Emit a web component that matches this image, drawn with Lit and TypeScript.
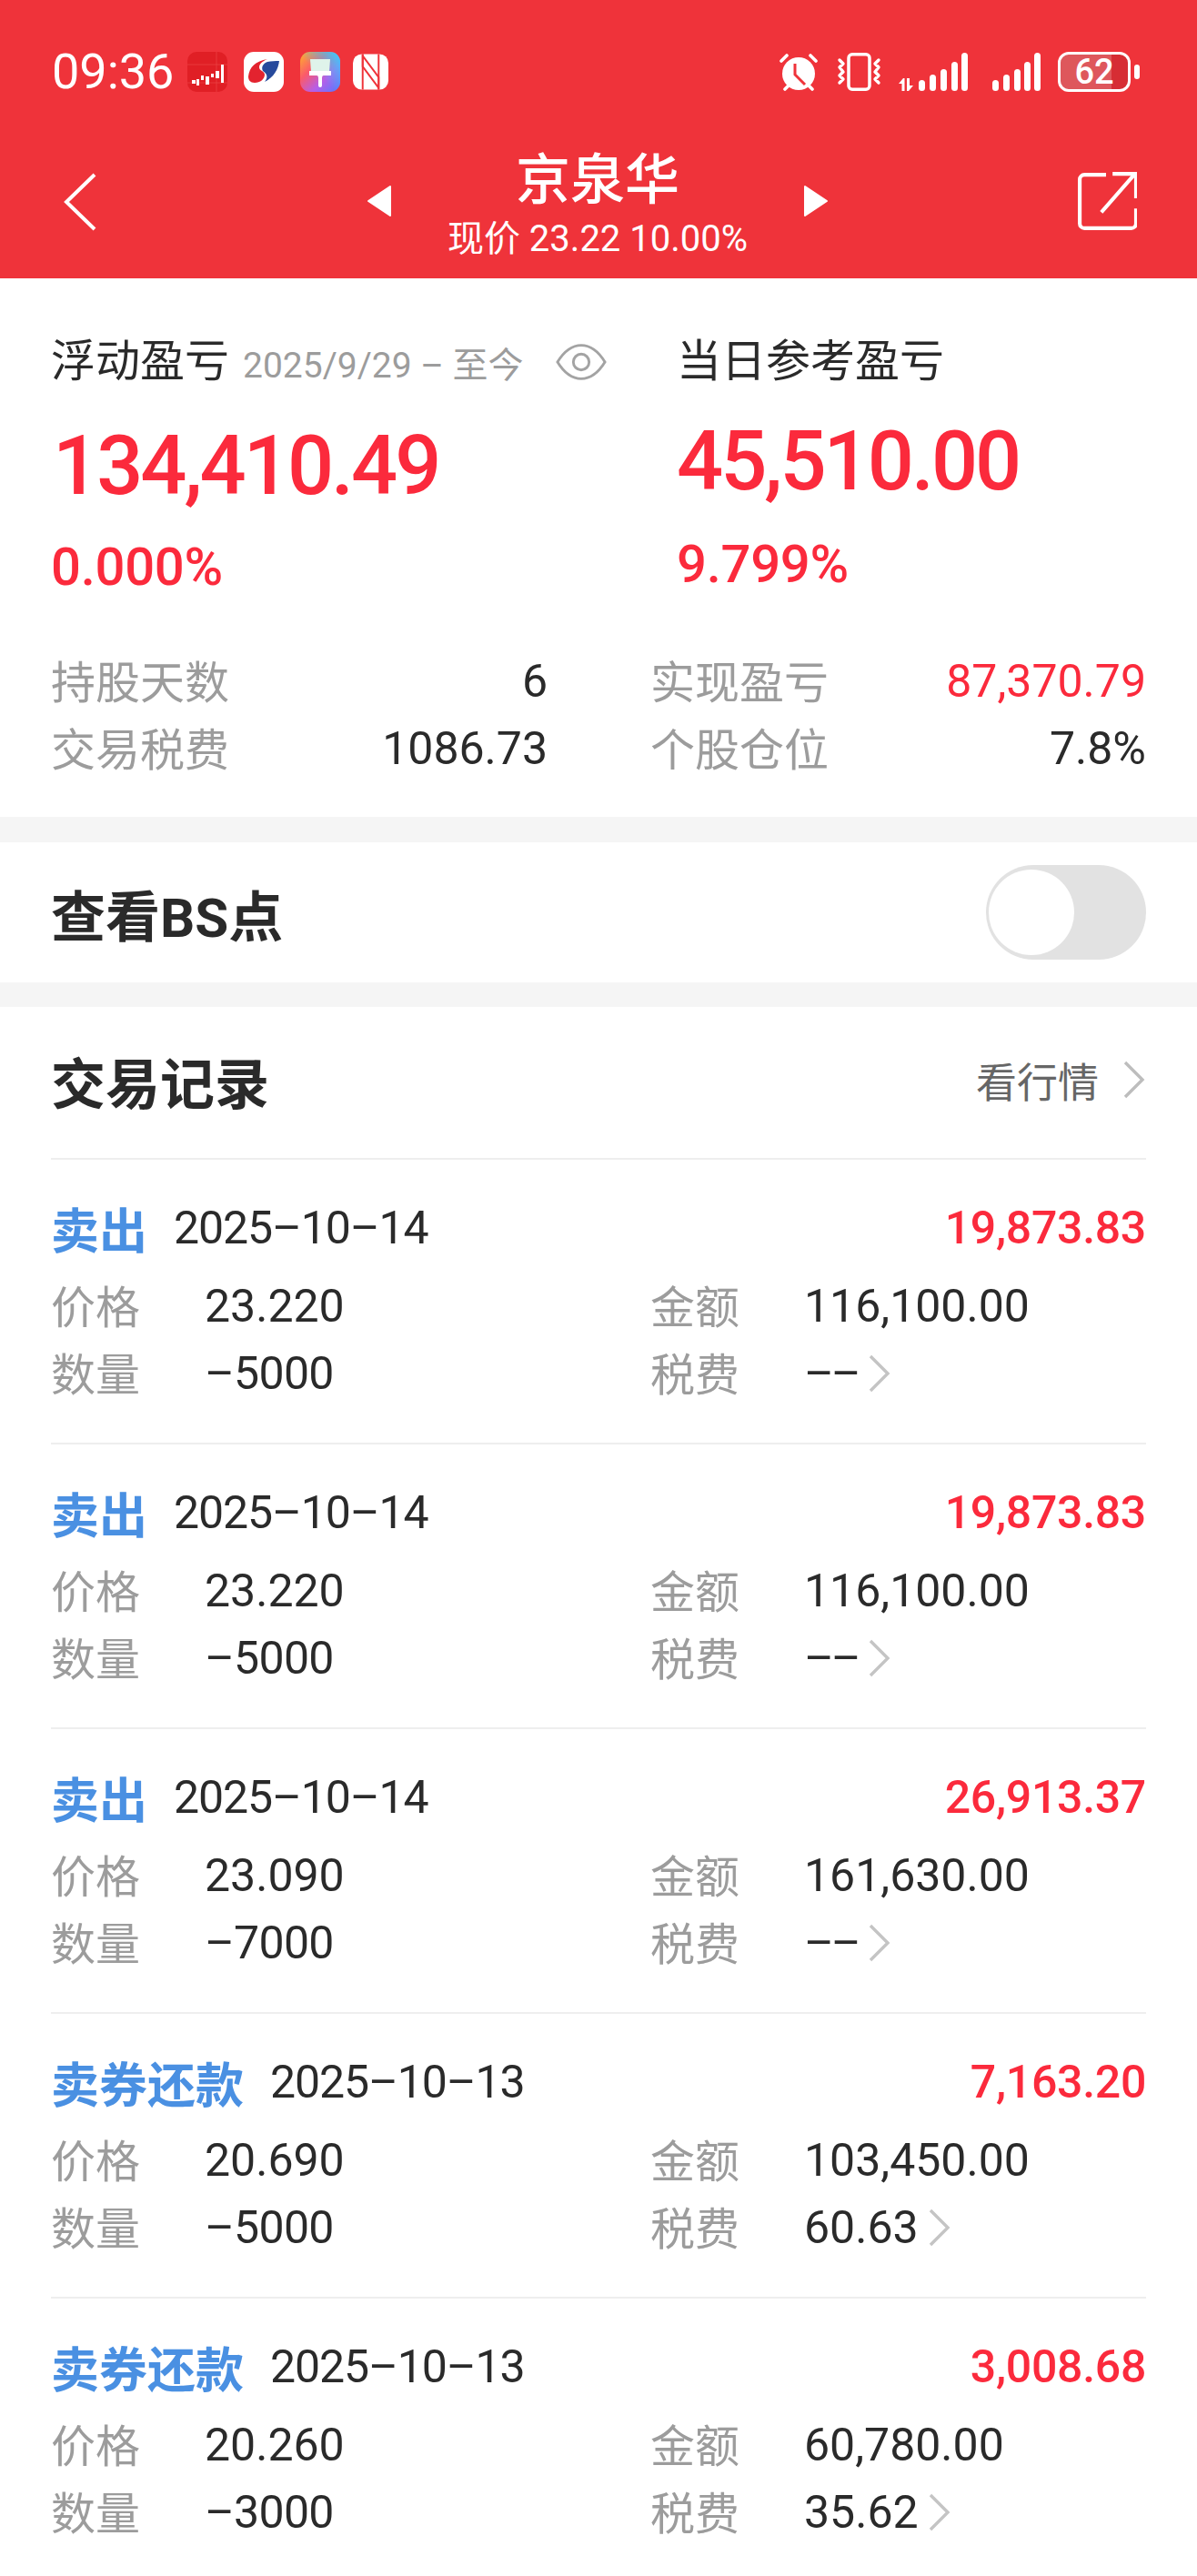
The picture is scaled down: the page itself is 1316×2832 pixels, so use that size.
import { css, html, LitElement, svg } from 'lit'
import { customElement } from 'lit/decorators.js'

const records = [
  { type: '卖出', date: '2025–10–14', profit: '19,873.83', price: '23.220', amount: '116,100.00', qty: '–5000', fee: '––' },
  { type: '卖出', date: '2025–10–14', profit: '19,873.83', price: '23.220', amount: '116,100.00', qty: '–5000', fee: '––' },
  { type: '卖出', date: '2025–10–14', profit: '26,913.37', price: '23.090', amount: '161,630.00', qty: '–7000', fee: '––' },
  { type: '卖券还款', date: '2025–10–13', profit: '7,163.20', price: '20.690', amount: '103,450.00', qty: '–5000', fee: '60.63' },
  { type: '卖券还款', date: '2025–10–13', profit: '3,008.68', price: '20.260', amount: '60,780.00', qty: '–3000', fee: '35.62' },
]

const chevron = svg`<svg class="chev" viewBox="0 0 26 42"><path d="M3 2l19 19L3 40" fill="none" stroke="#c4c4c4" stroke-width="3.4"/></svg>`

@customElement('app-root')
export class AppRoot extends LitElement {
  render() {
    return html`
      <header>
        <div class="status">
          <span class="time">09:36</span>
          <svg class="app" viewBox="0 0 44 44">
            <rect width="44" height="44" rx="10" fill="#e01f25"/>
            <path d="M0 14h44M0 34h44M32 0v44" stroke="#ee4a4a" stroke-width=".6"/>
            <g fill="#fff"><rect x="5" y="31" width="4" height="4"/><rect x="10" y="30" width="3" height="7"/><rect x="15" y="26" width="3" height="5"/><rect x="20" y="27" width="4" height="9"/><rect x="26" y="24" width="3" height="4"/><rect x="31" y="21" width="4" height="8"/><rect x="37" y="14" width="3" height="20"/></g>
          </svg>
          <svg class="app" viewBox="0 0 44 44">
            <rect width="44" height="44" rx="11" fill="#fff"/>
            <path d="M5 27C6 17 13 10 26 8c-5 2-9 5-9 9 0 4 6 4 6 8 0 5-5 9-11 9-5 0-7-3-7-7z" fill="#e3232f"/>
            <path d="M21 21c-2-4 0-8 5-10 4-1 9-1 13-1-1 9-6 18-16 23 3-4 4-8-2-12z" fill="#274a9c"/>
          </svg>
          <svg class="app" viewBox="0 0 44 44">
            <defs>
              <linearGradient id="paint" x1="0" y1="0" x2="1" y2="1">
                <stop offset="0" stop-color="#ffb42a"/><stop offset=".35" stop-color="#fb5a6a"/><stop offset=".65" stop-color="#b65ee8"/><stop offset="1" stop-color="#4f7cff"/>
              </linearGradient>
              <linearGradient id="paint2" x1="0" y1="1" x2="1" y2="0">
                <stop offset=".45" stop-color="#2fd3ff" stop-opacity="0"/><stop offset="1" stop-color="#2fd3ff"/>
              </linearGradient>
            </defs>
            <rect width="44" height="44" rx="11" fill="url(#paint)"/>
            <rect width="44" height="44" rx="11" fill="url(#paint2)"/>
            <path d="M11 8h22l-1 14H12z" fill="#dff3ea"/>
            <path d="M10 21h24v5h-8c-2 0-2 2-2 4v7a2 2 0 0 1-4 0v-7c0-2 0-4-2-4h-8z" fill="#fff"/>
          </svg>
          <svg class="nfc" viewBox="0 0 40 40">
            <rect width="40" height="40" rx="10" fill="#fff"/>
            <path d="M11 0v40M29 0v40" stroke="#ef333a" stroke-width="2"/>
            <path d="M11 2l18 24v14M29 38L11 14V0" fill="none" stroke="#ef333a" stroke-width="2"/>
          </svg>
          <span class="spacer"></span>
          <svg class="ic alarm" viewBox="0 0 44 42">
            <circle cx="22" cy="23" r="18" fill="#fff"/>
            <path d="M3 9l6-6M41 9l-6-6M7 40l4-4M37 40l-4-4" stroke="#fff" stroke-width="3.6" stroke-linecap="round"/>
            <path d="M18 12v12l11 11" fill="none" stroke="#ef333a" stroke-width="3"/>
          </svg>
          <svg class="ic vib" viewBox="0 0 51 42">
            <rect x="14" y="1.750" width="23" height="38.500" rx="4" fill="none" stroke="#fff" stroke-width="3.500"/>
            <path d="M4 8l4 4-4 4 4 5-4 4 4 4-4 4M47 8l-4 4 4 4-4 5 4 4-4 4 4 4" fill="none" stroke="#fff" stroke-width="3.400" stroke-linecap="round" stroke-linejoin="round"/>
          </svg>
          <svg class="ic sig1" viewBox="0 0 76 42">
            <path d="M5 28l-5 6h3.500v8h3v-14zM9 28h3v8h4l-5 6h-2z" fill="#fff"/>
            <rect x="22" y="30" width="7" height="12" rx="3.500" fill="#fff"/>
            <rect x="34" y="24" width="7" height="18" rx="3.500" fill="#fff"/>
            <rect x="46" y="18" width="7" height="24" rx="3.500" fill="#fff"/>
            <rect x="58" y="10" width="7" height="32" rx="3.500" fill="#fff"/>
            <rect x="69" y="0" width="7" height="42" rx="3.500" fill="#fff"/>
          </svg>
          <svg class="ic sig2" viewBox="0 0 53 42">
            <rect x="0" y="30" width="7" height="12" rx="3.500" fill="#fff"/>
            <rect x="12" y="24" width="7" height="18" rx="3.500" fill="#fff"/>
            <rect x="24" y="18" width="7" height="24" rx="3.500" fill="#fff"/>
            <rect x="35" y="10" width="7" height="32" rx="3.500" fill="#fff"/>
            <rect x="46" y="0" width="7" height="42" rx="3.500" fill="#fff"/>
          </svg>
          <span class="battery"><span class="level"></span><span class="pct">62</span></span>
          <span class="nub"></span>
        </div>
        <nav>
          <svg class="back" viewBox="0 0 36 64"><path d="M34 2L3 32l31 30" fill="none" stroke="#fff" stroke-width="4"/></svg>
          <div class="stock">
            <svg class="tri" viewBox="0 0 28 36"><path d="M26 2v32L2 18z" fill="#fff" stroke="#fff" stroke-width="2" stroke-linejoin="round"/></svg>
            <div class="name">
              <div class="title">京泉华</div>
              <div class="sub">现价 23.22 10.00%</div>
            </div>
            <svg class="tri" viewBox="0 0 28 36"><path d="M2 2v32l24-16z" fill="#fff" stroke="#fff" stroke-width="2" stroke-linejoin="round"/></svg>
          </div>
          <svg class="share" viewBox="0 0 64 64">
            <path d="M31 4H8a5 5 0 0 0-5 5v47a5 5 0 0 0 5 5h50a5 5 0 0 0 5-5V40" fill="none" stroke="#fff" stroke-width="4"/>
            <path d="M26 44L61 4M38 3h25v26" fill="none" stroke="#fff" stroke-width="4"/>
          </svg>
        </nav>
      </header>

      <section class="summary">
        <div class="hero">
          <div>
            <div class="hero-head">
              <span class="hero-title">浮动盈亏</span>
              <span class="range">2025/9/29 – 至今</span>
              <svg class="eye" viewBox="0 0 58 44">
                <path d="M2 22C10 9 19 3 29 3s19 6 27 19c-8 13-17 19-27 19S10 35 2 22z" fill="none" stroke="#a3a3a3" stroke-width="3"/>
                <circle cx="29" cy="22" r="9" fill="none" stroke="#a3a3a3" stroke-width="3"/>
              </svg>
            </div>
            <div class="big">134,410.49</div>
            <div class="rate">0.000%</div>
          </div>
          <div class="hero-right">
            <div class="hero-head"><span class="hero-title">当日参考盈亏</span></div>
            <div class="big">45,510.00</div>
            <div class="rate">9.799%</div>
          </div>
        </div>
        <div class="stats">
          <div class="stat"><span>持股天数</span><b>6</b></div>
          <div class="stat"><span>实现盈亏</span><b class="up">87,370.79</b></div>
          <div class="stat"><span>交易税费</span><b>1086.73</b></div>
          <div class="stat"><span>个股仓位</span><b>7.8%</b></div>
        </div>
      </section>

      <section class="bs">
        <span>查看BS点</span>
        <span class="toggle"><span class="knob"></span></span>
      </section>

      <section class="records">
        <div class="rec-head">
          <span class="rec-title">交易记录</span>
          <span class="more">看行情</span>
          <svg class="more-chev" viewBox="0 0 26 42"><path d="M3 2l19 19L3 40" fill="none" stroke="#bdbdbd" stroke-width="3.4"/></svg>
        </div>
        ${records.map(
          (r) => html`
            <div class="rec">
              <div class="rec-top">
                <span class="type">${r.type}</span>
                <span class="date">${r.date}</span>
                <span class="profit">${r.profit}</span>
              </div>
              <div class="rec-grid">
                <span class="lbl">价格</span><span class="val">${r.price}</span>
                <span class="lbl">金额</span><span class="val">${r.amount}</span>
                <span class="lbl">数量</span><span class="val qty">${r.qty}</span>
                <span class="lbl">税费</span><span class="val"><span class=${r.fee === '––' ? 'dash' : ''}>${r.fee}</span>${chevron}</span>
              </div>
            </div>
          `
        )}
      </section>
    `
  }

  static styles = css`
    :host {
      display: block;
      height: 2832px;
      overflow: hidden;
      background: #fff;
      color: #2a2a2a;
      font-family: Roboto, 'Noto Sans CJK SC', sans-serif;
    }

    header {
      height: 306px;
      background: #ef333a;
      color: #fff;
      box-sizing: border-box;
      padding-top: 57px;
    }

    .status {
      display: flex;
      align-items: center;
      height: 44px;
      padding: 0 63px 0 57px;
    }
    .time {
      font-size: 54px;
      line-height: 44px;
      width: 149px;
      font-weight: 450;
    }
    .app { width: 44px; height: 44px; margin-right: 18px; flex: none; }
    .nfc { width: 39px; height: 40px; margin-left: -4px; flex: none; }
    .spacer { flex: 1; }
    .ic { height: 42px; flex: none; }
    .alarm { width: 44px; margin-right: 19px; }
    .vib { width: 51px; margin-right: 18px; }
    .sig1 { width: 76px; margin-right: 27px; }
    .sig2 { width: 53px; margin-right: 19px; }
    .battery {
      position: relative;
      width: 80px;
      height: 44px;
      box-sizing: border-box;
      border: 3px solid #fff;
      border-radius: 12px;
      overflow: hidden;
      display: block;
      flex: none;
      background: rgba(0, 0, 0, 0.1);
    }
    .level {
      display: block;
      width: 56px;
      height: 100%;
      background: rgba(255, 255, 255, 0.2);
    }
    .battery .pct {
      position: absolute;
      left: 0;
      right: 0;
      top: 0;
      bottom: 0;
      text-align: center;
      font-size: 38px;
      line-height: 38px;
      font-weight: 500;
    }
    .nub {
      width: 6px;
      height: 16px;
      margin-left: 4px;
      border-radius: 3px;
      background: #fff;
      flex: none;
    }

    nav {
      display: grid;
      grid-template-columns: 1fr auto 1fr;
      align-items: flex-start;
      padding: 0 66px 0 64px;
      margin-top: 60px;
    }
    .back { width: 36px; height: 64px; margin: 29px 0 0 6px; }
    .stock {
      display: flex;
      align-items: center;
      justify-content: space-between;
      width: 511px;
    }
    .tri { width: 30px; height: 36px; flex: none; margin-bottom: 3px; }
    .name { text-align: center; }
    .title { font-size: 60px; line-height: 76px; font-weight: 500; }
    .sub { font-size: 40px; line-height: 42px; margin-top: 5px; white-space: nowrap; }
    .share { width: 66px; height: 66px; margin-top: 27px; justify-self: end; }

    .summary {
      height: 592px;
      box-sizing: border-box;
      padding: 62px 57px 0 56px;
    }
    .hero { display: grid; grid-template-columns: 688px 1fr; }
    .hero-head { display: flex; align-items: center; height: 60px; }
    .hero-title { font-size: 49px; line-height: 60px; }
    .range { font-size: 39px; color: #9c9c9c; margin-left: 15px; white-space: nowrap; }
    .eye { width: 56px; height: 44px; margin-left: 35px; flex: none; }
    .big {
      font-size: 90px;
      line-height: 100px;
      font-weight: 500;
      letter-spacing: -3px;
      color: #fb2a3c;
      margin: 35px 0 0 2px;
    }
    .rate {
      font-size: 58px;
      line-height: 70px;
      font-weight: 500;
      letter-spacing: -0.3px;
      color: #fb2a3c;
      margin-top: 25px;
    }
    .hero-right .big { margin: 30px 0 0 0; }
    .hero-right .rate { margin-top: 27px; }
    .stats {
      display: grid;
      grid-template-columns: 545px 544px;
      column-gap: 114px;
      row-gap: 14px;
      margin-top: 58px;
    }
    .stat {
      display: flex;
      justify-content: space-between;
      align-items: center;
      height: 60px;
      font-size: 49px;
      color: #9c9c9c;
    }
    .stat b {
      font-weight: 450;
      font-size: 50px;
      color: #2a2a2a;
      padding-top: 6px;
      margin-right: -1px;
    }
    .stat b.up { color: #fb2a3c; }

    .bs {
      height: 154px;
      border-top: 28px solid #f5f5f5;
      border-bottom: 27px solid #f5f5f5;
      display: flex;
      align-items: center;
      justify-content: space-between;
      padding: 0 56px;
      font-size: 60px;
      font-weight: 700;
    }
    .toggle {
      width: 176px;
      height: 104px;
      box-sizing: border-box;
      border-radius: 52px;
      background: #e2e2e2;
      display: flex;
      align-items: center;
      padding-left: 3px;
    }
    .knob {
      width: 94px;
      height: 94px;
      border-radius: 50%;
      background: #fff;
    }

    .records { padding: 0 56px; }
    .rec-head {
      height: 166px;
      display: flex;
      align-items: center;
      box-sizing: border-box;
      padding-bottom: 6px;
    }
    .rec-title { font-size: 60px; font-weight: 700; flex: 1; }
    .more { font-size: 45px; color: #666; }
    .more-chev { width: 26px; height: 42px; margin-left: 26px; }

    .rec {
      height: 313px;
      box-sizing: border-box;
      border-top: 2px solid #eeeeee;
    }
    .rec-top {
      display: flex;
      align-items: center;
      height: 64px;
      margin-top: 43px;
    }
    .type { font-size: 53px; font-weight: 700; color: #4a90e2; }
    .date { font-size: 50px; font-weight: 450; letter-spacing: -1.1px; margin-left: 29px; flex: 1; }
    .profit { font-size: 50px; font-weight: 500; letter-spacing: -0.3px; color: #fb2a3c; }
    .rec-grid {
      display: grid;
      grid-template-columns: 169px 490px 169px 1fr;
      grid-auto-rows: 74px;
      align-items: center;
      margin-top: 14px;
    }
    .lbl { font-size: 49px; color: #9c9c9c; }
    .val { font-size: 50px; font-weight: 450; padding-top: 6px; display: flex; align-items: center; }
    .qty { letter-spacing: -0.7px; }
    .dash { letter-spacing: -3px; }
    .chev { width: 26px; height: 42px; margin-left: 10px; }
  `
}
